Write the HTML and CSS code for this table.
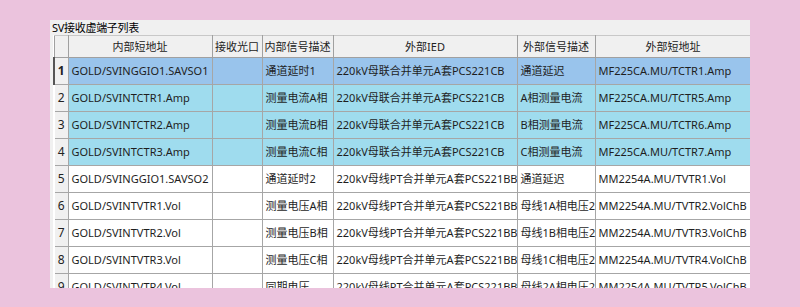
FILE: index.html
```html
<!DOCTYPE html>
<html>
<head>
<meta charset="utf-8">
<link rel="stylesheet" href="styles.css">
</head>
<body>
<div class="panel">
  <div class="title">SV接收虚端子列表</div>
  <table class="grid">
    <colgroup>
      <col class="c0"><col class="c1"><col class="c2"><col class="c3"><col class="c4"><col class="c5"><col class="c6">
    </colgroup>
    <thead>
      <tr><th class="corner"></th><th>内部短地址</th><th>接收光口</th><th>内部信号描述</th><th>外部IED</th><th>外部信号描述</th><th>外部短地址</th></tr>
    </thead>
    <tbody>
      <tr class="sel"><td class="rh cur">1</td><td>GOLD/SVINGGIO1.SAVSO1</td><td></td><td>通道延时1</td><td>220kV母联合并单元A套PCS221CB</td><td>通道延迟</td><td>MF225CA.MU/TCTR1.Amp</td></tr>
      <tr class="hl"><td class="rh">2</td><td>GOLD/SVINTCTR1.Amp</td><td></td><td>测量电流A相</td><td>220kV母联合并单元A套PCS221CB</td><td>A相测量电流</td><td>MF225CA.MU/TCTR5.Amp</td></tr>
      <tr class="hl"><td class="rh">3</td><td>GOLD/SVINTCTR2.Amp</td><td></td><td>测量电流B相</td><td>220kV母联合并单元A套PCS221CB</td><td>B相测量电流</td><td>MF225CA.MU/TCTR6.Amp</td></tr>
      <tr class="hl"><td class="rh">4</td><td>GOLD/SVINTCTR3.Amp</td><td></td><td>测量电流C相</td><td>220kV母联合并单元A套PCS221CB</td><td>C相测量电流</td><td>MF225CA.MU/TCTR7.Amp</td></tr>
      <tr><td class="rh">5</td><td>GOLD/SVINGGIO1.SAVSO2</td><td></td><td>通道延时2</td><td>220kV母线PT合并单元A套PCS221BB</td><td>通道延迟</td><td>MM2254A.MU/TVTR1.Vol</td></tr>
      <tr><td class="rh">6</td><td>GOLD/SVINTVTR1.Vol</td><td></td><td>测量电压A相</td><td>220kV母线PT合并单元A套PCS221BB</td><td>母线1A相电压2</td><td>MM2254A.MU/TVTR2.VolChB</td></tr>
      <tr><td class="rh">7</td><td>GOLD/SVINTVTR2.Vol</td><td></td><td>测量电压B相</td><td>220kV母线PT合并单元A套PCS221BB</td><td>母线1B相电压2</td><td>MM2254A.MU/TVTR3.VolChB</td></tr>
      <tr><td class="rh">8</td><td>GOLD/SVINTVTR3.Vol</td><td></td><td>测量电压C相</td><td>220kV母线PT合并单元A套PCS221BB</td><td>母线1C相电压2</td><td>MM2254A.MU/TVTR4.VolChB</td></tr>
      <tr><td class="rh">9</td><td>GOLD/SVINTVTR4.Vol</td><td></td><td>同期电压</td><td>220kV母线PT合并单元A套PCS221BB</td><td>母线2A相电压2</td><td>MM2254A.MU/TVTR5.VolChB</td></tr>
    </tbody>
  </table>
</div>
</body>
</html>
```
FILE: styles.css
```css
html, body {
  margin: 0;
  padding: 0;
}
body {
  background: #ebc3dd;
  width: 800px;
  height: 307px;
  overflow: hidden;
  font-family: "Noto Sans", "Noto Sans CJK SC", sans-serif;
  color: #1e1e1e;
}
.panel {
  margin: 20px 0 0 50px;
  width: 700px;
  height: 268px;
  background: #f0f0f0;
  overflow: hidden;
  padding-left: 3px;
  box-sizing: border-box;
}
.title {
  height: 15px;
  font-size: 11px;
  line-height: 15px;
  color: #000;
  margin-left: -1px;
  letter-spacing: -0.3px;
}
.grid {
  border-collapse: collapse;
  table-layout: fixed;
  width: 697px;
  font-size: 11px;
  background: #fff;
}
.c0 { width: 14px; }
.c1 { width: 144px; }
.c2 { width: 50px; }
.c3 { width: 71px; }
.c4 { width: 184px; }
.c5 { width: 78px; }
.c6 { width: 156px; }
.grid th {
  height: 21px;
  background: #f0f0f0;
  font-weight: normal;
  border: 1px solid #a0a0a0;
  border-top-color: #c8c8c8;
  padding: 0;
  white-space: nowrap;
  overflow: hidden;
  line-height: 20px;
  color: #222;
}
.grid td {
  height: 26px;
  border: 1px solid #a6a6a6;
  padding: 0 0 0 3px;
  white-space: nowrap;
  overflow: hidden;
  line-height: 20px;
}
.grid td.rh {
  background: #f0f0f0;
  padding: 0;
  text-align: center;
  border-left: 2px solid #ffffff;
  color: #222;
  font-size: 12px;
}
.grid td.rh.cur {
  border-left: 2px solid #555;
  font-weight: bold;
}
tr.sel td {
  background: #99c4ec;
}
tr.hl td {
  background: #9fdcee;
}
tr.sel td.rh, tr.hl td.rh {
  background: #f0f0f0;
}
```
